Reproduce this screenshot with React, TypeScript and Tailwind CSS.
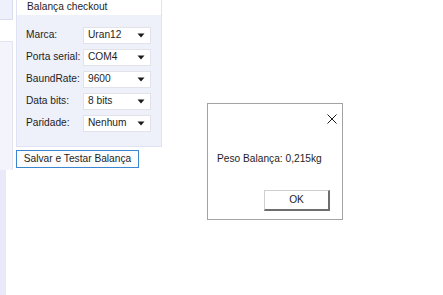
import React from "react";

const font = { fontFamily: '"Liberation Sans", Arial, sans-serif' };

function Combo({ value }: { value: string }) {
  return (
    <div className="w-[68px] h-[17px] bg-white border border-[#e2e3ea] flex items-center justify-between pl-[4px] pr-[5px]">
      <span className="leading-none">{value}</span>
      <svg width="8" height="5" viewBox="0 0 8 5">
        <path d="M0.5 0.5 L7.5 0.5 L4 4.5 Z" fill="#1a1a1a" />
      </svg>
    </div>
  );
}

const rows: [string, string][] = [
  ["Marca:", "Uran12"],
  ["Porta serial:", "COM4"],
  ["BaundRate:", "9600"],
  ["Data bits:", "8 bits"],
  ["Paridade:", "Nenhum"],
];

export default function App() {
  return (
    <div
      className="w-[443px] h-[295px] bg-white relative overflow-hidden text-[10.2px] text-[#1e1e1e] flex"
      style={font}
    >
      {/* left strip */}
      <div className="w-[16px] flex flex-col shrink-0">
        <div className="w-[13px] h-[20px] bg-[#eef0fb] border-r border-b border-[#d9dcf0]" />
        <div className="h-[21px]" />
        <div className="w-[13px] h-[129px] bg-[#f3f4fc] border-r border-t border-[#e2e4f4]" />
        <div className="w-[6px] flex-1 bg-[#e8eafa]" />
      </div>

      <div className="flex flex-col">
        {/* group box */}
        <div className="w-[146px] flex flex-col border border-t-0 border-[#dfe2f2]">
          <div className="h-[15px] bg-white flex items-center pl-[10px] leading-none">
            Balança checkout
          </div>
          <div className="h-[131px] bg-[#eef0fa] pt-[12px] pl-[9px] flex flex-col gap-[5px]">
            {rows.map(([label, value]) => (
              <div key={label} className="flex items-center h-[17px]">
                <span className="w-[57px] leading-none whitespace-nowrap">{label}</span>
                <Combo value={value} />
              </div>
            ))}
          </div>
        </div>
        <div className="mt-[3px] w-[123px] h-[18px] border border-[#3b86d1] bg-[#fdfdfd] flex items-center justify-center leading-none whitespace-nowrap">
          Salvar e Testar Balança
        </div>
      </div>

      {/* message box */}
      <div className="absolute left-[207px] top-[103px] w-[136px] h-[117px] bg-white border border-[#a3a3a3]">
        <svg
          className="absolute left-[119px] top-[10px]"
          width="10"
          height="10"
          viewBox="0 0 10 10"
        >
          <path d="M0.5 0.5 L9.5 9.5 M9.5 0.5 L0.5 9.5" stroke="#1a1a1a" strokeWidth="1" />
        </svg>
        <div className="absolute left-[9px] top-[50px] leading-none whitespace-nowrap">
          Peso Balança: 0,215kg
        </div>
        <div className="absolute left-[56px] top-[86px] w-[66px] h-[21px] bg-white border border-[#cfcfcf] border-r-2 border-b-2 border-r-[#6e6e6e] border-b-[#6e6e6e] flex items-center justify-center leading-none">
          OK
        </div>
      </div>
    </div>
  );
}
